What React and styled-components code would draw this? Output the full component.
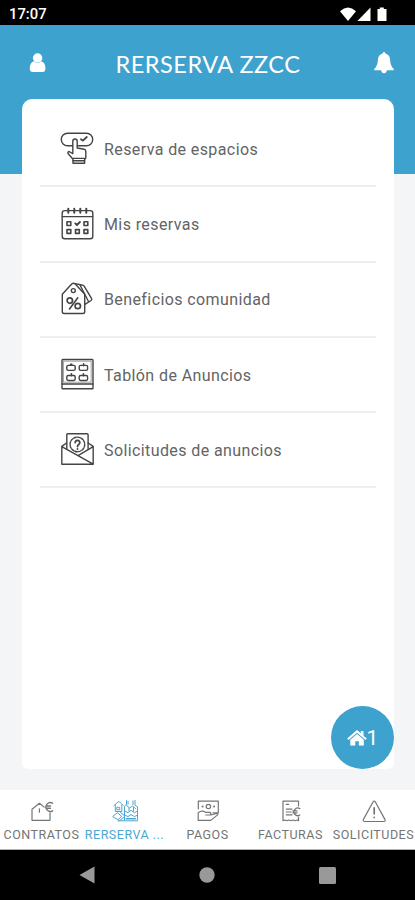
import React, { useState } from 'react'
import styled, { createGlobalStyle } from 'styled-components'

const GlobalStyle = createGlobalStyle`
  * {
    box-sizing: border-box;
  }
  body {
    margin: 0;
    background: #000;
    font-family: Roboto, "Liberation Sans", sans-serif;
  }
`

const SScreen = styled.div`
  width: 100%;
  height: 900px;
  display: flex;
  flex-direction: column;
  overflow: hidden;
`

const SStatusBar = styled.div`
  height: 25px;
  flex-shrink: 0;
  display: flex;
  align-items: center;
  justify-content: space-between;
  padding: 3px 27px 0 9px;
  background: #000;
  color: #fff;
  font-size: 14.8px;
  font-weight: 500;
`

const SMain = styled.main`
  height: 765px;
  flex-shrink: 0;
  display: flex;
  flex-direction: column;
  position: relative;
  background: linear-gradient(#3ea2cf 149px, #f3f5f7 149px);
`

const SHeader = styled.header`
  height: 74px;
  display: flex;
  align-items: center;
  justify-content: space-between;
  padding: 2px 20px 0 28px;
  color: #fff;
`

const STitle = styled.h1`
  margin: 2px 5px 0 0;
  font-family: Lato, sans-serif;
  font-size: 23.5px;
  line-height: 28px;
  font-weight: 400;
  letter-spacing: 0.5px;
  white-space: nowrap;
`

const SIconBtn = styled.button`
  display: flex;
  padding: 0;
  border: 0;
  background: none;
  color: inherit;
`

const SCard = styled.section`
  width: 372px;
  height: 670px;
  margin-left: 22px;
  padding: 13px 18px 0;
  border-radius: 10px 10px 6px 6px;
  background: #fff;
`

const SMenuRow = styled.a`
  height: 75.3px;
  display: flex;
  align-items: center;
  padding-left: 20px;
  border-bottom: 2px solid #eeeeef;
  color: #444;
  svg {
    width: 34px;
    height: 34px;
    flex-shrink: 0;
    margin-right: 10px;
  }
`

const SMenuLabel = styled.span`
  padding-top: 1px;
  color: #646464;
  font-size: 16px;
  font-weight: 400;
  letter-spacing: 0.4px;
  white-space: nowrap;
`

const SHomeBtn = styled.button`
  position: absolute;
  right: 21px;
  bottom: 21px;
  width: 63px;
  height: 63px;
  display: flex;
  align-items: center;
  justify-content: center;
  padding: 0;
  border: 0;
  border-radius: 50%;
  background: #3ea2cf;
  color: #fff;
  font-family: inherit;
  font-size: 21px;
`

const STabBar = styled.nav`
  height: 60px;
  flex-shrink: 0;
  display: grid;
  grid-template-columns: repeat(5, 83px);
  background: #fff;
  border-bottom: 1px solid #b5b5b5;
`

const STab = styled.a`
  display: flex;
  flex-direction: column;
  align-items: center;
  padding-top: 9px;
  color: ${({ $active }) => ($active ? '#4ba7d1' : '#757575')};
  svg {
    width: 26px;
    height: 24px;
  }
`

const STabLabel = styled.span`
  margin-top: 4px;
  font-size: 12.5px;
  line-height: 15px;
  letter-spacing: 0.5px;
  white-space: nowrap;
`

const SAndroidBar = styled.div`
  height: 50px;
  flex-shrink: 0;
  display: flex;
  align-items: center;
  justify-content: center;
  gap: 104px;
  background: #000;
  color: #999;
`

const Line = ({ children, box = '0 0 34 34', weight = 1.4 }) => (
  <svg
    viewBox={box}
    fill="none"
    stroke="currentColor"
    strokeWidth={weight}
    strokeLinejoin="round"
    strokeLinecap="round"
  >
    {children}
  </svg>
)

const SpacesIcon = () => (
  <Line>
    <path d="M12.5 13.7H7.5a6.2 6.2 0 0 1 0-12.4h19a6.2 6.2 0 0 1 0 12.4h-9" />
    <path d="M21 7.2l1.800 1.400 4-3.600" strokeWidth="1.8" />
    <path d="M12.8 21V9.2a2.2 2.2 0 0 1 4.4 0V16l7 1.2q1.6.4 1.6 2V26l-1.2 1.500v3.700H13v-4L8 21.5q-.6-1.6 1-2l3.8 2.2" />
    <path d="M13 26.4h11.6M13 28.8h11.6" />
  </Line>
)

const CalendarIcon = () => (
  <Line>
    <rect x="2.2" y="3.6" width="30.6" height="28.2" rx="2.5" />
    <path d="M2.2 9.600h30.6" />
    <path d="M8.3 1.8v4M14.3 1.8v4M20.3 1.8v4M26.3 1.8v4" strokeWidth="2" />
    <path d="M7 14.7h3.8v3.8H7zM24 14.7h3.8v3.8H24zM7 22.6h3.8v3.8H7zM15.5 22.6h3.8v3.8h-3.8zM24 22.6h3.8v3.8H24z" strokeWidth="1.6" />
    <path d="M15.3 16.4l1.6 1.6 3-3" strokeWidth="1.9" />
  </Line>
)

const DiscountIcon = () => (
  <Line>
    <path d="M2.3 12.2L11.7 2q1.8-1.7 3.6 0l9.4 10.2v17.5q0 1.8-1.8 1.8H4.1q-1.8 0-1.8-1.8z" />
    <circle cx="13.3" cy="8.6" r="2" />
    <path d="M15.5 1.8l7.2 1.3q1 .3 1.6 1.2l7.2 12q.7 1.3-.4 2.2l-6.2 3.9M20 3l8.5 16.500" />
    <circle cx="9.800" cy="18.600" r="2.700" strokeWidth="1.7" />
    <circle cx="17.800" cy="24" r="2.700" strokeWidth="1.7" />
    <path d="M17.800 15.800L9.500 27" strokeWidth="1.600" />
  </Line>
)

const BoardIcon = () => (
  <Line>
    <rect x="2" y="1.5" width="31" height="29.3" rx=".8" />
    <path d="M2 26h31" />
    <path d="M3.8 3.2h27.4v21H3.8z" strokeWidth=".5" />
    <rect x="6.8" y="7.400" width="8.4" height="5" rx="1.400" />
    <rect x="19.2" y="7.400" width="8.4" height="5" rx="1.400" />
    <rect x="6.8" y="17.5" width="8.4" height="5" rx="1.400" />
    <rect x="19.2" y="17.5" width="8.4" height="5" rx="1.400" />
    <path d="M10.5 6.3h1.4M23.6 5.8v2M11.4 15.8v2M23.4 15.8v2" strokeWidth="1.6" />
  </Line>
)

const EnvelopeIcon = () => (
  <Line>
    <path d="M6.8 16V1.8q0-1 1-1h19.3q1 0 1 1V16" />
    <circle cx="17.4" cy="11.4" r="7.3" strokeDasharray="2.6 1.2" />
    <path d="M15.2 9.6a2.3 2.3 0 1 1 3.5 2q-1.2.7-1.2 2M17.5 15.8v.2" strokeWidth="1.8" />
    <path d="M6.5 10L1.8 13.4v17.8h31.4V13.4L28.2 10M1.8 13.6l31 17.2M33.2 13.6L18 22.6" />
  </Line>
)

const HouseEuroIcon = () => (
  <Line box="0 0 26 24" weight={1.2}>
    <path d="M3 21.3V10.2L10.4 4.3l4.8 3.8M3 21.3h18v-7.5M10.4 9.8v3.4" />
    <path d="M23.6 4.2a4.4 4.4 0 1 0 0 7.6M17.3 7h4.2M17.3 9.2h4.2" strokeWidth="1.4" />
  </Line>
)

const AmenitiesIcon = () => (
  <Line box="0 0 26 24" weight={1}>
    <path d="M2 6.5L7 2.3l4.2 4.2M3.3 6v6.5h6.5V6M5.2 8.3h2.5v2.5H5.2zM1.2 17l4.3-3.2 4.2 3.5L6 20.7 1.2 18zM12.5 21.5V7.5l2-2.3V1.5M23 1.3v5l2.5 1.5v13.5M14.5 6.3l3 2.7 3-2 3 2.5M12.5 12l3.5 1.6 3-2.2 3.5 2.3 3-1.6M12.5 16l3.5 1.6 3-2 3.5 2 3-1.5M6 21.8h19.2M16 2.3v3M21 2v3.5M17 9v3M21.5 8.5v3.8M8.5 13.5l3.8 3M7 22l5-3.7" />
    <path d="M14.2 19.8h9.2" strokeWidth="1.5" />
  </Line>
)

const PaymentIcon = () => (
  <Line box="0 0 26 24" weight={1.2}>
    <path d="M3.3 9.8V2.2h20v11.6H18" />
    <circle cx="13.4" cy="7.5" r="2.2" />
    <path d="M7.5 7.5h.2M19 7.5h.2" strokeWidth="1.8" />
    <path d="M3.2 21.400v-7.600q4-3 7.3-.4h4q1.7.3 1.3 2.6h-5M15.7 16l6-1.7q2 .4.6 1.8l-6.500 5.300H3.200" />
  </Line>
)

const InvoiceIcon = () => (
  <Line box="0 0 26 24" weight={1.2}>
    <path d="M20.5 7V2.2H5v19.5l2-.7 2 .7 2-.7 2 .7 2-.7 2 .7 2-.7 1.5.7V18" />
    <path d="M8.3 5.4h2.2M8.3 10.2H14M8.3 13h5M8.3 15.8H14" />
    <path d="M21.8 9.6a3.8 3.8 0 1 0 0 6.4M15 11.9h4M15 13.9h4" strokeWidth="1.3" />
  </Line>
)

const WarningIcon = () => (
  <Line box="0 0 26 24" weight={1.2}>
    <path d="M12 3q1.2-1.8 2.4 0l9.6 17.6q.6 1.8-1.2 1.9H3.5q-1.7-.1-1.2-1.9z" />
    <path d="M13.2 8.8v6M13.2 18.3v.2" strokeWidth="1.7" />
  </Line>
)

const menuItems = [
  { label: 'Reserva de espacios', Icon: SpacesIcon },
  { label: 'Mis reservas', Icon: CalendarIcon },
  { label: 'Beneficios comunidad', Icon: DiscountIcon },
  { label: 'Tablón de Anuncios', Icon: BoardIcon },
  { label: 'Solicitudes de anuncios', Icon: EnvelopeIcon },
]

const tabs = [
  { label: 'CONTRATOS', Icon: HouseEuroIcon },
  { label: 'RERSERVA ...', Icon: AmenitiesIcon },
  { label: 'PAGOS', Icon: PaymentIcon },
  { label: 'FACTURAS', Icon: InvoiceIcon },
  { label: 'SOLICITUDES', Icon: WarningIcon },
]

function App() {
  const [activeTab, setActiveTab] = useState(1)

  return (
    <SScreen>
      <GlobalStyle />
      <SStatusBar>
        <span>17:07</span>
        <svg width="48" height="15" viewBox="0 0 48 15" fill="#fff">
          <path d="M0 4.2Q8 -3 16 4.2L8 14z" />
          <path d="M30.5.6V14H17.4z" />
          <path d="M37.500 2h2.300V.4h4V2h2.700v12h-9z" />
        </svg>
      </SStatusBar>
      <SMain>
        <SHeader>
          <SIconBtn aria-label="Perfil">
            <svg width="20" height="22" viewBox="0 0 20 22" fill="currentColor">
              <circle cx="9.6" cy="6" r="4.7" />
              <path d="M5.8 9.3q3.8 3.4 7.6 0 4 1.2 4 7.2 0 3.5-3 3.5H5q-3.2 0-3.2-3.5 0-6 4-7.2z" />
            </svg>
          </SIconBtn>
          <STitle>RERSERVA ZZCC</STitle>
          <SIconBtn aria-label="Avisos">
            <svg width="22" height="24" viewBox="0 0 22 24" fill="currentColor">
              <path d="M11 1q1.3 0 1.4 1.6 4.6 1.2 4.8 7 .1 5.400 3.500 8.300v1.300h-6.900q-.3 3-2.800 3t-2.800-3H1.300v-1.300q3.400-2.900 3.500-8.300.2-5.800 4.800-7Q9.7 1 11 1z" />
            </svg>
          </SIconBtn>
        </SHeader>
        <SCard>
          {menuItems.map(({ label, Icon }) => (
            <SMenuRow key={label}>
              <Icon />
              <SMenuLabel>{label}</SMenuLabel>
            </SMenuRow>
          ))}
        </SCard>
        <SHomeBtn>
          <svg width="20" height="18" viewBox="0 0 20 18" fill="currentColor">
            <path d="M10 1l3.8 3.3V2h2.7v4.7L19.8 9.6l-1.3 1.3L10 3.7l-8.5 7.2L.2 9.6z" />
            <path d="M10 5l6.8 5.8v5.8h-5v-4.4H8.3v4.4h-5v-5.8z" />
          </svg>
          1
        </SHomeBtn>
      </SMain>
      <STabBar>
        {tabs.map(({ label, Icon }, i) => (
          <STab key={label} $active={i === activeTab} onClick={() => setActiveTab(i)}>
            <Icon />
            <STabLabel>{label}</STabLabel>
          </STab>
        ))}
      </STabBar>
      <SAndroidBar>
        <svg width="16" height="18" viewBox="0 0 16 18" fill="currentColor">
          <path d="M15.5.5v17L.5 9z" />
        </svg>
        <svg width="16" height="16" viewBox="0 0 16 16" fill="currentColor">
          <circle cx="8" cy="8" r="7.7" />
        </svg>
        <svg width="17" height="17" viewBox="0 0 17 17" fill="currentColor">
          <rect width="17" height="17" rx="1.5" />
        </svg>
      </SAndroidBar>
    </SScreen>
  )
}

export default App
